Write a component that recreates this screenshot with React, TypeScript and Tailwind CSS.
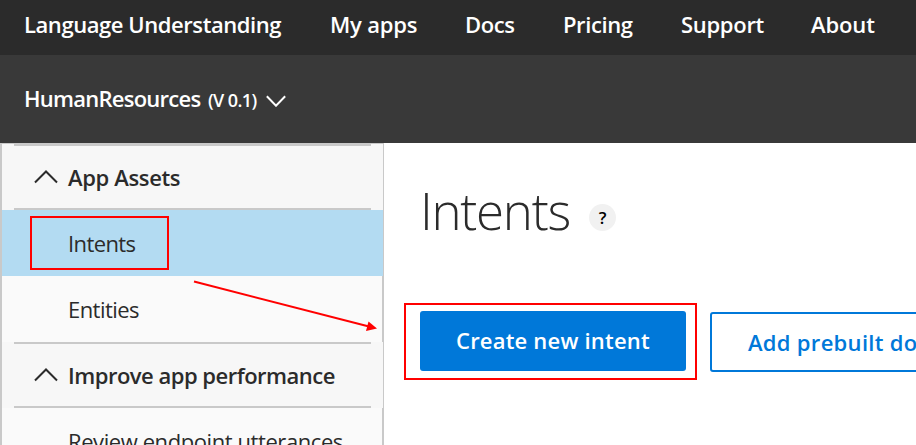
import type { ReactNode } from "react";

const navItems = [
  { label: "Language Understanding", width: "w-[258px]", tracking: "tracking-[-0.43px]" },
  { label: "My apps", width: "w-[87px]", tracking: "tracking-[-0.2px]" },
  { label: "Docs", width: "w-[50px]", tracking: "tracking-[-0.4px]" },
  { label: "Pricing", width: "w-[70px]", tracking: "tracking-[-0.4px]" },
  { label: "Support", width: "w-[82px]", tracking: "tracking-[-0.3px]" },
  { label: "About", width: "w-[64px]", tracking: "tracking-[-0.1px]" },
];

function Chevron({ up = false, className }: { up?: boolean; className: string }) {
  return (
    <svg className={className} viewBox="0 0 24 14" fill="none" stroke="currentColor" preserveAspectRatio="none">
      <path d={up ? "M1 12.5 12 1.5 23 12.5" : "M1 1.5 12 12.5 23 1.5"} strokeWidth="2" vectorEffect="non-scaling-stroke" />
    </svg>
  );
}

function SectionHeader({ children, tracking }: { children: string; tracking: string }) {
  return (
    <div className="flex h-[66px] shrink-0 flex-col border-r border-[#c9c9c9] bg-[#f7f7f7]">
      <div className="ml-3 h-0.5 w-[357px] shrink-0 bg-[#c9c9c9]" />
      <div className="flex flex-1 items-center pl-8">
        <Chevron up className="mr-[10px] h-[14px] w-6" />
        <span className={`whitespace-nowrap font-semibold ${tracking}`}>{children}</span>
      </div>
      <div className="ml-3 h-0.5 w-[357px] shrink-0 bg-[#c9c9c9]" />
    </div>
  );
}

function SideItem({ children, active = false, tracking }: { children: ReactNode; active?: boolean; tracking: string }) {
  return (
    <div
      className={`flex h-[66px] shrink-0 items-center pl-[66px] ${
        active ? "border-r border-[#c9c9c9] bg-[#b3dbf2]" : "border-r-2 border-[#c9c9c9] bg-[#fafafa]"
      }`}
    >
      <span className={`whitespace-nowrap ${tracking}`}>{children}</span>
    </div>
  );
}

export default function App() {
  return (
    <div className="relative flex h-[445px] w-[916px] flex-col overflow-hidden bg-white font-['Open_Sans','Noto_Sans',sans-serif] text-[22px] leading-[30px] text-[#2b2b2b]">
      <nav className="flex h-[55px] shrink-0 gap-12 bg-[#2b2b2b] pl-6 pt-[9px] font-semibold text-white">
        {navItems.map((n) => (
          <a key={n.label} className={`shrink-0 whitespace-nowrap ${n.width} ${n.tracking}`}>
            {n.label}
          </a>
        ))}
      </nav>
      <header className="flex h-[88px] shrink-0 items-center bg-[#393939] pb-0.5 pl-6 text-white">
        <span className="w-[184px] shrink-0 whitespace-nowrap font-semibold tracking-[-0.75px]">HumanResources</span>
        <span className="w-[58px] shrink-0 whitespace-nowrap pt-1 text-[18px] font-semibold tracking-[-0.6px]">(V 0.1)</span>
        <Chevron className="h-[12px] w-5 translate-y-[3px]" />
      </header>
      <div className="flex min-h-0 flex-1">
        <aside className="flex w-[384px] shrink-0 flex-col overflow-hidden border-l-2 border-t border-[#c9c9c9]">
          <SectionHeader tracking="tracking-[-0.35px]">App Assets</SectionHeader>
          <SideItem active tracking="tracking-[-0.6px]">Intents</SideItem>
          <SideItem tracking="tracking-[-0.55px]">Entities</SideItem>
          <SectionHeader tracking="tracking-[-0.5px]">Improve app performance</SectionHeader>
          <SideItem tracking="tracking-[-0.42px]">Review endpoint utterances</SideItem>
        </aside>
        <main className="flex min-w-0 flex-1 flex-col overflow-hidden pl-9">
          <div className="flex h-[168px] shrink-0 pt-8">
            <h1 className="w-[169px] shrink-0 whitespace-nowrap text-[51px] font-light leading-[70px] tracking-[-1.3px]">Intents</h1>
            <span className="mt-[29px] flex size-[27px] shrink-0 items-center justify-center rounded-full bg-[#f1f1f1] text-[17px] font-semibold text-black">
              ?
            </span>
          </div>
          <div className="flex gap-6 font-semibold">
            <button className="h-[60px] w-[266px] shrink-0 whitespace-nowrap rounded-[3px] bg-[#0078d9] pb-0.5 pl-9 text-left tracking-[0.2px] text-white">
              Create new intent
            </button>
            <button className="mt-px h-[60px] w-[330px] shrink-0 whitespace-nowrap rounded-[3px] border-2 border-[#0078d9] pl-9 text-left tracking-[0.3px] text-[#0078d9]">
              Add prebuilt domain intent
            </button>
          </div>
        </main>
      </div>
      <svg className="pointer-events-none absolute inset-0" width="916" height="445" fill="none" stroke="#f00" strokeWidth="2">
        <rect x="31" y="217" width="137" height="52" />
        <rect x="405" y="304" width="291" height="75" />
        <path d="M194 281.5 368 326.3" />
        <path d="M377 328.5 366 331 368.5 321.5Z" fill="#f00" stroke="none" />
      </svg>
    </div>
  );
}
